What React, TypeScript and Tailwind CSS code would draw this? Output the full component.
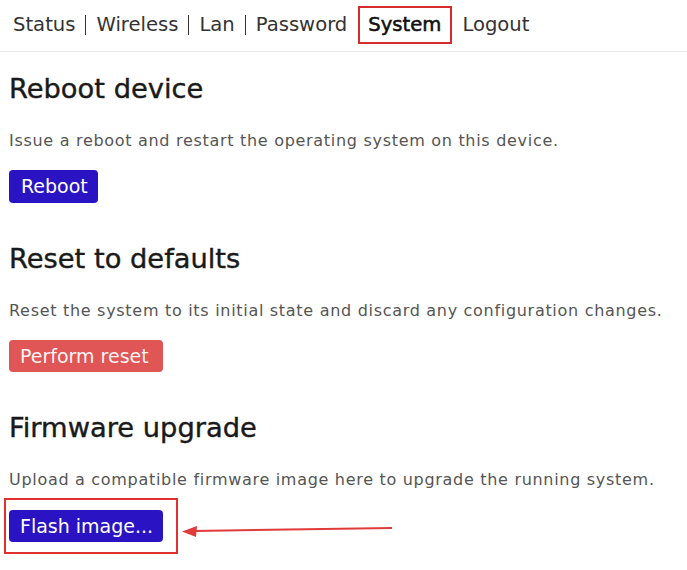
import { useState } from 'react';

const tabs = ['Status', 'Wireless', 'Lan', 'Password', 'System', 'Logout'];

export default function App() {
  const [active] = useState('System');

  return (
    <div className="w-[687px] h-[570px] bg-white text-[#222] overflow-hidden" style={{ fontFamily: '"DejaVu Sans", "Noto Sans", sans-serif' }}>
      {/* Top nav */}
      <nav className="h-[52px] border-b border-[#e8e8e8] flex items-center pl-[13px] pb-[1px] text-[19.6px] text-[#333]">
        {tabs.map((t, i) => {
          const next = tabs[i + 1];
          const sep = next && t !== 'Password' && t !== 'System' && next !== 'System';
          return (
            <div key={t} className="flex items-center">
              {t === active ? (
                <span className="ml-[11px] mr-[10px] pl-[8px] pr-[9px] h-[38px] flex items-center border-2 border-[#d42b2b] text-[#111] [-webkit-text-stroke:0.55px_#111]">
                  {t}
                </span>
              ) : (
                <span>{t}</span>
              )}
              {sep && <span className="mx-[10px] w-px h-[20px] bg-[#333] shrink-0" />}
            </div>
          );
        })}
      </nav>

      <main className="pl-[9px] pt-[20px]">
        <Section
          title="Reboot device"
          desc="Issue a reboot and restart the operating system on this device."
          button={<button className="h-[33px] pl-[12px] pr-[10px] rounded-[4px] bg-[#2a13c2] text-white text-[19px]">Reboot</button>}
        />
        <Section
          title="Reset to defaults"
          desc="Reset the system to its initial state and discard any configuration changes."
          button={<button className="h-[32px] pl-[11px] pr-[14px] rounded-[4px] bg-[#e05656] text-white/95 text-[19px]">Perform reset</button>}
        />
        <div>
          <Heading>Firmware upgrade</Heading>
          <p className="mt-[25px] text-[16px] tracking-[0.7px] leading-[20px] text-[#555]">
            Upload a compatible firmware image here to upgrade the running system.
          </p>
          <div className="mt-[8px] flex items-center">
            <div className="-ml-[5px] border-2 border-[#e03030] pl-[3px] pr-[13px] pt-[10px] pb-[10px]">
              <button className="h-[32px] pl-[11px] pr-[10px] rounded-[4px] bg-[#2a13c2] text-white text-[19px] block">Flash image...</button>
            </div>
            <svg width="220" height="16" viewBox="0 0 220 16" className="ml-[2px] mt-[10px]">
              <path d="M14 8 L212 5" stroke="#e03a3a" strokeWidth="2" fill="none" />
              <path d="M2 8.5 L17 3 L16 14 Z" fill="#e03a3a" />
            </svg>
          </div>
        </div>
      </main>
    </div>
  );
}

function Heading({ children }: { children: React.ReactNode }) {
  return (
    <h2 className="text-[27.3px] leading-[34px] text-[#1a1a1a] [-webkit-text-stroke:0.4px_#1a1a1a]">{children}</h2>
  );
}

function Section({ title, desc, button }: { title: string; desc: string; button: React.ReactNode }) {
  return (
    <div className="mb-[39px]">
      <Heading>{title}</Heading>
      <p className="mt-[25px] text-[16px] tracking-[0.7px] leading-[20px] text-[#555]">{desc}</p>
      <div className="mt-[19px]">{button}</div>
    </div>
  );
}
